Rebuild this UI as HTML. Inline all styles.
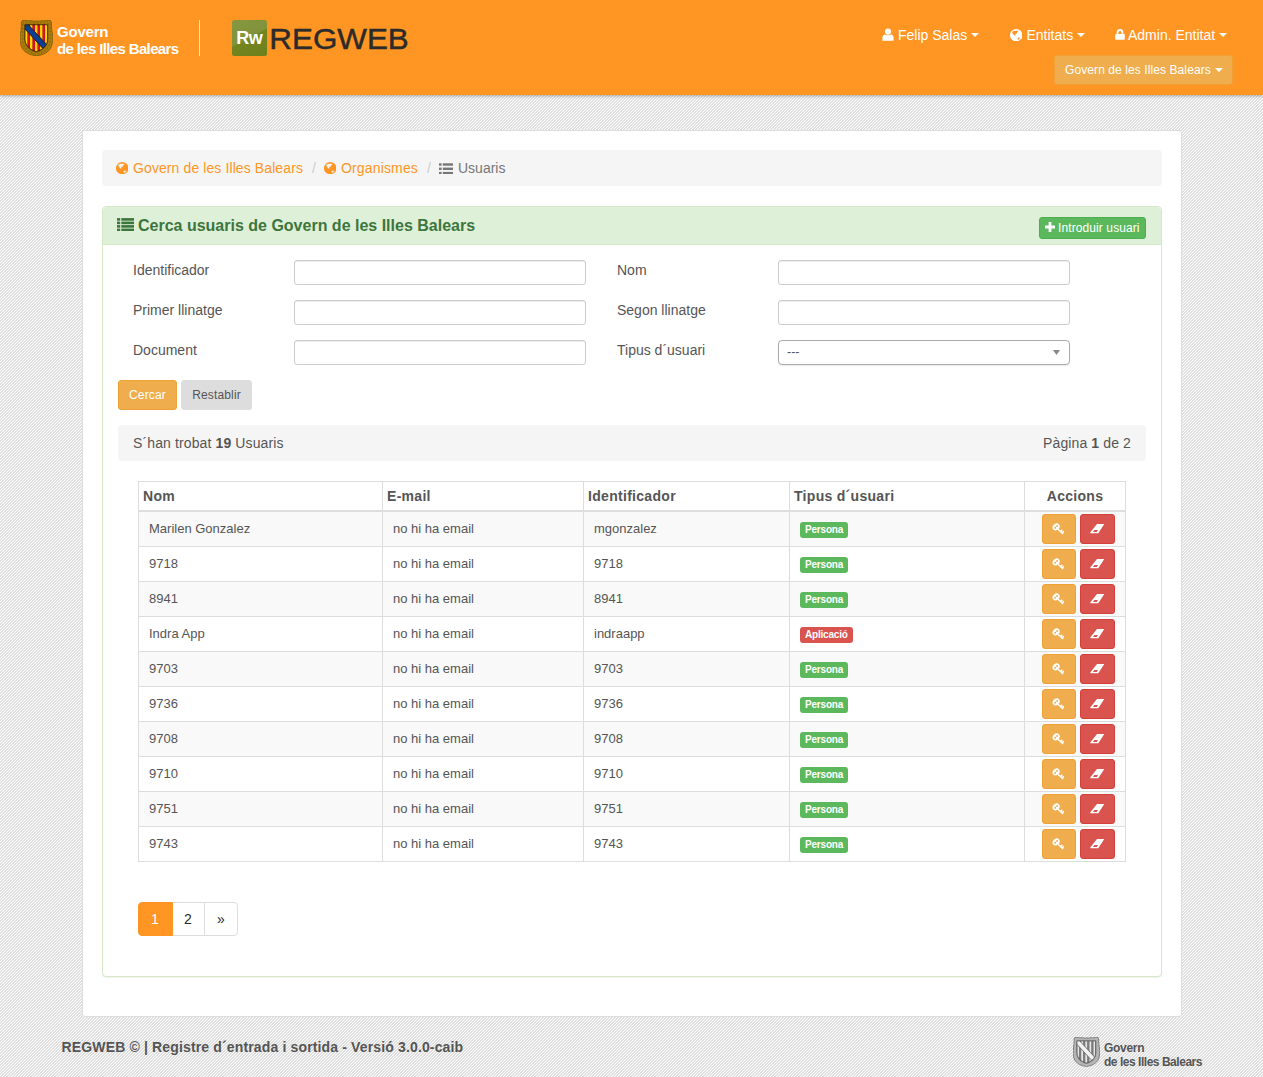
<!DOCTYPE html>
<html lang="ca">
<head>
<meta charset="utf-8">
<title>REGWEB</title>
<style>
*{box-sizing:border-box;}
html,body{margin:0;padding:0;}
body{width:1263px;height:1077px;position:relative;overflow:hidden;font-family:"Liberation Sans",Arial,sans-serif;font-size:14px;line-height:20px;color:#555;background:#e8e8e8;}
#bgpat{position:absolute;left:0;top:0;width:1263px;height:1077px;z-index:0;}
.abs{position:absolute;}
/* header */
#hdr{position:absolute;left:0;top:0;width:1263px;height:95px;background:#ff9523;box-shadow:0 1px 3px rgba(0,0,0,.3);z-index:2;}
#hdr .gv{position:absolute;left:57px;color:#fff;font-weight:bold;font-size:15px;line-height:17px;letter-spacing:-0.35px;white-space:nowrap;}
#hdr .sep{position:absolute;left:199px;top:20px;width:1px;height:36px;background:rgba(255,255,255,.75);}
#rw{position:absolute;left:231.7px;top:20.3px;width:35.2px;height:35.5px;border-radius:2.5px;background:linear-gradient(152deg,#86983f 0%,#80933a 48%,#72851f 51%,#6e801c 100%);color:#fff;font-weight:bold;font-size:18px;line-height:35.5px;text-align:center;letter-spacing:-0.4px;padding-top:1.2px;}
.nav{position:absolute;top:25px;height:20px;color:#fff;font-size:14px;line-height:20px;white-space:nowrap;}
.nav svg{position:absolute;top:4px;}
.caret{display:inline-block;width:0;height:0;border-left:4px solid transparent;border-right:4px solid transparent;border-top:4px solid currentColor;vertical-align:middle;margin-left:4px;position:relative;top:-1px;}
#entbtn{position:absolute;left:1054px;top:55px;width:179px;height:30px;background:#f0ad4e;border:1px solid #eea236;border-radius:3px;color:#fff;font-size:12px;line-height:28px;padding-left:10px;white-space:nowrap;letter-spacing:.09px;}
/* container */
#cont{position:absolute;left:82px;top:130px;width:1100px;height:887px;background:#fff;border:1px solid #dedede;border-radius:3px;z-index:1;}
#bc{position:absolute;left:19px;top:19px;width:1060px;height:36px;background:#f5f5f5;border-radius:4px;font-size:14px;line-height:20px;padding-top:8px;white-space:nowrap;}
#bc span{position:absolute;top:8px;}
#bc .o{color:#ff9523;}
#bc .g{color:#777;}
#bc .s{color:#ccc;}
#bc svg{position:absolute;}
#panel{position:absolute;left:19px;top:75px;width:1060px;height:771px;box-shadow:0 1px 1px rgba(0,0,0,.05);border:1px solid #d6e9c6;border-radius:4px;background:#fff;}
#ph{position:absolute;left:0;top:0;width:1058px;height:38px;background:#dff0d8;border-bottom:1px solid #d6e9c6;border-radius:3px 3px 0 0;}
#ph .t{position:absolute;left:35px;top:10px;font-size:16px;line-height:18px;font-weight:bold;color:#3c763d;white-space:nowrap;}
#ph svg{position:absolute;}
#newbtn{position:absolute;left:936px;top:10px;width:107px;height:22px;background:#5cb85c;border:1px solid #4cae4c;border-radius:3px;color:#fff;font-size:12px;line-height:20px;white-space:nowrap;}
#newbtn span{position:absolute;left:18px;top:0;letter-spacing:.1px;}
.lbl{position:absolute;font-size:14px;line-height:20px;color:#555;white-space:nowrap;}
.inp{position:absolute;width:292px;height:25px;border:1px solid #ccc;border-radius:3px;background:#fff;box-shadow:inset 0 1px 1px rgba(0,0,0,.075);}
.btn{position:absolute;letter-spacing:.15px;height:30px;border-radius:3px;font-size:12px;line-height:28px;text-align:center;border:1px solid transparent;white-space:nowrap;}
#well{position:absolute;left:15px;top:218px;width:1028px;height:36px;background:#f5f5f5;border-radius:4px;font-size:14px;line-height:20px;color:#555;}
#well b{color:#555;}
#well span{letter-spacing:.12px;}
/* table */
#tbl{position:absolute;left:35px;top:274px;width:988px;border-collapse:collapse;table-layout:fixed;font-size:13px;color:#555;}
#tbl th,#tbl td{border:1px solid #ddd;padding:0;white-space:nowrap;overflow:hidden;}
#tbl th{height:29px;font-size:14px;font-weight:bold;text-align:left;padding-left:4px;border-bottom:2px solid #ddd;letter-spacing:.3px;line-height:20px;color:#555;vertical-align:middle;}
#tbl td{height:35px;padding-left:10px;line-height:20px;vertical-align:middle;}
#tbl tr.od td{background:#f9f9f9;}
#tbl tr.r1 td{height:36px;}
#tbl tr.r1 .tag{top:1px;}
.tag{display:inline-block;position:relative;top:0;height:16px;border-radius:3px;color:#fff;font-size:10px;font-weight:bold;line-height:16px;padding:0 5px;vertical-align:middle;letter-spacing:-0.2px;}
.tg{background:#5cb85c;}
.tr{background:#d9534f;}
#tbl td.ac{padding:0;position:relative;}
.ab{position:absolute;top:2px;height:30px;border-radius:3px;border:1px solid;}
.ab svg{position:absolute;}
.ak{left:17px;width:34px;background:#f0ad4e;border-color:#eea236;}
.ae{left:55px;width:35px;background:#d9534f;border-color:#d43f3a;}
/* pagination */
.pg{position:absolute;top:695px;height:34px;border:1px solid #ddd;background:#fff;color:#2a2a2a;font-size:14px;line-height:32px;text-align:center;}
/* footer */
#ft{position:absolute;left:61.6px;top:1037px;font-size:14px;font-weight:bold;color:#555;line-height:20px;white-space:nowrap;z-index:1;letter-spacing:.145px;}
#fl{position:absolute;left:1104px;top:1041px;font-size:12px;font-weight:bold;color:#555;line-height:14px;white-space:nowrap;z-index:1;letter-spacing:-0.3px;}
</style>
</head>
<body>
<svg id="bgpat" width="1263" height="1077" shape-rendering="crispEdges">
<defs><pattern id="dg" width="3" height="3" patternUnits="userSpaceOnUse"><rect width="3" height="3" fill="#dfdfdf"/><rect x="1" y="0" width="1" height="1" fill="#fff"/><rect x="0" y="1" width="1" height="1" fill="#fff"/><rect x="2" y="2" width="1" height="1" fill="#fff"/></pattern></defs>
<rect width="1263" height="1077" fill="url(#dg)"/>
</svg>

<div id="hdr">
<svg class="abs" style="left:20px;top:19.6px;" width="33" height="36.4" viewBox="0 0 33 36.4"><defs><clipPath id="shc"><path d="M5 4.8 H27.6 V19 C27.6 25.5 22.5 30 16.3 31.6 C10.1 30 5 25.5 5 19 Z"/></clipPath></defs><path d="M2.2 0.6 C5 -0.2 7 1.2 9.4 0.8 C11.4 0.2 13 1.6 16.4 1.0 C19.6 1.6 21.4 0.2 23.4 0.8 C25.8 1.2 27.8 -0.2 30.6 0.6 C32 2.4 31.2 5 31.6 8 C31.4 11 32.8 13 32.6 16.4 C33 19.6 32.4 22 32 24.4 C31.4 27.6 29.6 30.4 27 32 C24.6 34 21.6 35 19 35.4 C17.4 36.2 15.4 36.2 13.8 35.4 C11.2 35 8.2 34 5.8 32 C3.2 30.4 1.4 27.6 0.8 24.4 C0.4 22 -0.2 19.6 0.2 16.4 C0 13 1.4 11 1.2 8 C1.6 5 0.8 2.4 2.2 0.6 Z" fill="#ad7c0c" stroke="#80600c" stroke-width="0.9"/><path d="M2.6 3 H30.2 V19.5 C30.2 27.5 24 33 16.4 34.2 C8.8 33 2.6 27.5 2.6 19.5 Z" fill="none" stroke="#7d5a08" stroke-width="1.1" stroke-dasharray="1.6 1.9" opacity=".75"/><path d="M4.2 4 H28.4 V19 C28.4 26 23 30.8 16.3 32.5 C9.6 30.8 4.2 26 4.2 19 Z" fill="#7d5a08"/><g clip-path="url(#shc)"><rect x="5.00" y="4" width="2.56" height="29" fill="#ffd800"/><rect x="7.51" y="4" width="2.56" height="29" fill="#d8102c"/><rect x="10.02" y="4" width="2.56" height="29" fill="#ffd800"/><rect x="12.53" y="4" width="2.56" height="29" fill="#d8102c"/><rect x="15.04" y="4" width="2.56" height="29" fill="#ffd800"/><rect x="17.56" y="4" width="2.56" height="29" fill="#d8102c"/><rect x="20.07" y="4" width="2.56" height="29" fill="#ffd800"/><rect x="22.58" y="4" width="2.56" height="29" fill="#d8102c"/><rect x="25.09" y="4" width="2.56" height="29" fill="#ffd800"/><path d="M5.3 1.4 L29.0 27.2 L25.4 31.2 L1.7 5.4 Z" fill="#0b3f94" stroke="#2a1a08" stroke-width="0.9"/></g><path d="M5 4.8 H27.6 V19 C27.6 25.5 22.5 30 16.3 31.6 C10.1 30 5 25.5 5 19 Z" fill="none" stroke="#2a1a08" stroke-width="0.7"/></svg>
<div class="gv" style="top:23px;letter-spacing:-0.2px;">Govern</div>
<div class="gv" style="top:40px;letter-spacing:-0.64px;">de les Illes Balears</div>
<div class="sep"></div>
<div id="rw">Rw</div>
<svg class="abs" style="left:268px;top:20px;" width="145" height="36"><text x="1.3" y="29.0" font-family="Liberation Sans, Arial, sans-serif" font-size="28.8" fill="#2b2b2b" stroke="#2b2b2b" stroke-width="0.45" textLength="139.5" lengthAdjust="spacingAndGlyphs">REGWEB</text></svg>

<div class="nav" style="left:882px;"><svg width="12" height="13" viewBox="0 0 12 13" style="left:0;top:3px;color:#fff"><circle cx="6" cy="3.6" r="3.1" fill="#fff"/><path d="M0.4 12.7 V9.6 C0.4 7.6 1.6 6.6 3.2 6.4 C4.8 7.6 7.2 7.6 8.8 6.4 C10.4 6.6 11.6 7.6 11.6 9.6 V12.7 Z" fill="#fff"/></svg><span style="margin-left:16px;">Felip Salas</span><i class="caret"></i></div>
<div class="nav" style="left:1009px;"><svg width="12.4" height="12.4" viewBox="0 0 12 12" style="left:0.5px;top:4px;color:#fff"><circle cx="6" cy="6" r="6" fill="currentColor"/><path d="M2.2 2.6 L4.2 1.6 L5.6 2.0 L6.6 1.4 L8.2 1.9 L7.4 3.0 L6.2 4.6 L5.0 5.4 L5.3 6.6 L4.4 6.4 L3.2 5.2 L2.4 4.0 Z M7.4 8.6 L9.0 8.2 L9.8 8.8 L8.6 10.2 L7.6 10.4 Z" fill="#ff9523"/></svg><span style="margin-left:17.5px;">Entitats</span><i class="caret"></i></div>
<div class="nav" style="left:1114px;"><svg width="10" height="11" viewBox="0 0 10 11" style="left:0.5px;top:4.3px;"><path d="M1.7 5.2 V3.5 A3.3 3.4 0 0 1 8.3 3.5 V5.2 H6.6 V3.6 A1.6 1.7 0 0 0 3.4 3.6 V5.2 Z" fill="#fff"/><rect x="0.2" y="4.9" width="9.6" height="5.9" rx="0.7" fill="#fff"/></svg><span style="margin-left:14px;">Admin. Entitat</span><i class="caret"></i></div>
<div id="entbtn">Govern de les Illes Balears<i class="caret" style="margin-left:4px;"></i></div>

</div>

<div id="cont">
<div id="bc"><svg width="12.4" height="12.4" viewBox="0 0 12 12" style="left:14px;top:12px;"><circle cx="6" cy="6" r="6" fill="#ff9523"/><path d="M2.2 2.6 L4.2 1.6 L5.6 2.0 L6.6 1.4 L8.2 1.9 L7.4 3.0 L6.2 4.6 L5.0 5.4 L5.3 6.6 L4.4 6.4 L3.2 5.2 L2.4 4.0 Z M7.4 8.6 L9.0 8.2 L9.8 8.8 L8.6 10.2 L7.6 10.4 Z" fill="#f5f5f5"/></svg><span class="o" style="left:31px;letter-spacing:.1px;">Govern de les Illes Balears</span><span class="s" style="left:210px;">/</span><svg width="12.4" height="12.4" viewBox="0 0 12 12" style="left:222px;top:12px;"><circle cx="6" cy="6" r="6" fill="#ff9523"/><path d="M2.2 2.6 L4.2 1.6 L5.6 2.0 L6.6 1.4 L8.2 1.9 L7.4 3.0 L6.2 4.6 L5.0 5.4 L5.3 6.6 L4.4 6.4 L3.2 5.2 L2.4 4.0 Z M7.4 8.6 L9.0 8.2 L9.8 8.8 L8.6 10.2 L7.6 10.4 Z" fill="#f5f5f5"/></svg><span class="o" style="left:239px;letter-spacing:.15px;">Organismes</span><span class="s" style="left:325px;">/</span><svg width="14.2" height="11.6" viewBox="0 0 14.2 11.6" style="left:337.2px;top:12.6px;"><g fill="#777"><rect x="0" y="0.3" width="2.6" height="2.4"/><rect x="3.8" y="0.3" width="10.4" height="2.4"/><rect x="0" y="4.6" width="2.6" height="2.4"/><rect x="3.8" y="4.6" width="10.4" height="2.4"/><rect x="0" y="8.9" width="2.6" height="2.4"/><rect x="3.8" y="8.9" width="10.4" height="2.4"/></g></svg><span class="g" style="left:356px;">Usuaris</span></div>
<div id="panel">
<div id="ph"><svg width="17.2" height="13.2" viewBox="0 0 17.2 13.2" style="left:13.8px;top:11px;"><g fill="#3c763d"><rect x="0" y="0.1" width="3.2" height="2.6"/><rect x="4.3" y="0.1" width="12.9" height="2.6"/><rect x="0" y="3.6" width="3.2" height="2.6"/><rect x="4.3" y="3.6" width="12.9" height="2.6"/><rect x="0" y="7.1" width="3.2" height="2.6"/><rect x="4.3" y="7.1" width="12.9" height="2.6"/><rect x="0" y="10.6" width="3.2" height="2.6"/><rect x="4.3" y="10.6" width="12.9" height="2.6"/></g></svg><div class="t">Cerca usuaris de Govern de les Illes Balears</div><div id="newbtn"><svg width="10" height="10" viewBox="0 0 10 10" style="left:5px;top:4.2px;"><path d="M3.6 0 H6.4 V3.6 H10 V6.4 H6.4 V10 H3.6 V6.4 H0 V3.6 H3.6 Z" fill="#fff"/></svg><span>Introduir usuari</span></div></div>
<div class="lbl" style="left:30px;top:53px;">Identificador</div>
<div class="lbl" style="left:30px;top:93px;">Primer llinatge</div>
<div class="lbl" style="left:30px;top:133px;">Document</div>
<div class="lbl" style="left:514px;top:53px;">Nom</div>
<div class="lbl" style="left:514px;top:93px;">Segon llinatge</div>
<div class="lbl" style="left:514px;top:133px;">Tipus d´usuari</div>
<div class="inp" style="left:191px;top:53px;"></div>
<div class="inp" style="left:191px;top:93px;"></div>
<div class="inp" style="left:191px;top:133px;"></div>
<div class="inp" style="left:675px;top:53px;"></div>
<div class="inp" style="left:675px;top:93px;"></div>
<div class="inp" style="left:675px;top:133px;font-size:12.5px;line-height:22px;padding-left:8px;color:#555;border-color:#aaa;border-radius:4px;box-shadow:0 1px 1px rgba(0,0,0,.08);">---<svg class="abs" style="right:9.5px;top:9px;" width="7" height="5" viewBox="0 0 7 5"><path d="M0 0 H7 L3.5 5 Z" fill="#888"/></svg></div>
<div class="btn" style="left:15px;top:173px;width:59px;background:#f0ad4e;border-color:#eea236;color:#fff;">Cercar</div>
<div class="btn" style="left:78px;top:173px;width:71px;background:#ddd;border-color:#ddd;color:#555;">Restablir</div>
<div id="well"><span class="abs" style="left:15px;top:8px;white-space:nowrap;">S´han trobat <b>19</b> Usuaris</span><span class="abs" style="right:15px;top:8px;white-space:nowrap;">Pàgina <b>1</b> de 2</span></div>

<table id="tbl"><colgroup><col style="width:244px"><col style="width:201px"><col style="width:206px"><col style="width:235px"><col style="width:101px"></colgroup>
<tr><th>Nom</th><th>E-mail</th><th>Identificador</th><th>Tipus d´usuari</th><th style="text-align:center;padding-left:0;">Accions</th></tr>
<tr class="od r1"><td>Marilen Gonzalez</td><td>no hi ha email</td><td>mgonzalez</td><td><span class="tag tg">Persona</span></td><td class="ac"><div class="ab ak"><svg width="13" height="12" viewBox="0 0 13 12" style="left:9px;top:8px;"><ellipse cx="4.1" cy="3.9" rx="3.8" ry="3.1" transform="rotate(-40 4.1 3.9)" fill="#fff"/><circle cx="5.1" cy="3.05" r="0.95" fill="#f0ad4e"/><circle cx="3.15" cy="4.75" r="0.95" fill="#f0ad4e"/><path d="M6 6.2 L11.2 11 M8.6 8.5 L10.3 6.8 M10.1 9.9 L11.8 8.2" stroke="#fff" stroke-width="1.5" fill="none"/></svg></div><div class="ab ae"><svg width="15" height="10" viewBox="0 0 15 10" style="left:9px;top:9px;"><path d="M7.0 0 H14.3 L8.3 9.2 H0.6 Q-0.1 9.0 0.4 8.3 Z" fill="#fff"/><path d="M4.3 6.0 H8.0 L6.8 8.0 H3.0 Z" fill="#d9534f"/></svg></div></td></tr>
<tr><td>9718</td><td>no hi ha email</td><td>9718</td><td><span class="tag tg">Persona</span></td><td class="ac"><div class="ab ak"><svg width="13" height="12" viewBox="0 0 13 12" style="left:9px;top:8px;"><ellipse cx="4.1" cy="3.9" rx="3.8" ry="3.1" transform="rotate(-40 4.1 3.9)" fill="#fff"/><circle cx="5.1" cy="3.05" r="0.95" fill="#f0ad4e"/><circle cx="3.15" cy="4.75" r="0.95" fill="#f0ad4e"/><path d="M6 6.2 L11.2 11 M8.6 8.5 L10.3 6.8 M10.1 9.9 L11.8 8.2" stroke="#fff" stroke-width="1.5" fill="none"/></svg></div><div class="ab ae"><svg width="15" height="10" viewBox="0 0 15 10" style="left:9px;top:9px;"><path d="M7.0 0 H14.3 L8.3 9.2 H0.6 Q-0.1 9.0 0.4 8.3 Z" fill="#fff"/><path d="M4.3 6.0 H8.0 L6.8 8.0 H3.0 Z" fill="#d9534f"/></svg></div></td></tr>
<tr class="od"><td>8941</td><td>no hi ha email</td><td>8941</td><td><span class="tag tg">Persona</span></td><td class="ac"><div class="ab ak"><svg width="13" height="12" viewBox="0 0 13 12" style="left:9px;top:8px;"><ellipse cx="4.1" cy="3.9" rx="3.8" ry="3.1" transform="rotate(-40 4.1 3.9)" fill="#fff"/><circle cx="5.1" cy="3.05" r="0.95" fill="#f0ad4e"/><circle cx="3.15" cy="4.75" r="0.95" fill="#f0ad4e"/><path d="M6 6.2 L11.2 11 M8.6 8.5 L10.3 6.8 M10.1 9.9 L11.8 8.2" stroke="#fff" stroke-width="1.5" fill="none"/></svg></div><div class="ab ae"><svg width="15" height="10" viewBox="0 0 15 10" style="left:9px;top:9px;"><path d="M7.0 0 H14.3 L8.3 9.2 H0.6 Q-0.1 9.0 0.4 8.3 Z" fill="#fff"/><path d="M4.3 6.0 H8.0 L6.8 8.0 H3.0 Z" fill="#d9534f"/></svg></div></td></tr>
<tr><td>Indra App</td><td>no hi ha email</td><td>indraapp</td><td><span class="tag tr">Aplicació</span></td><td class="ac"><div class="ab ak"><svg width="13" height="12" viewBox="0 0 13 12" style="left:9px;top:8px;"><ellipse cx="4.1" cy="3.9" rx="3.8" ry="3.1" transform="rotate(-40 4.1 3.9)" fill="#fff"/><circle cx="5.1" cy="3.05" r="0.95" fill="#f0ad4e"/><circle cx="3.15" cy="4.75" r="0.95" fill="#f0ad4e"/><path d="M6 6.2 L11.2 11 M8.6 8.5 L10.3 6.8 M10.1 9.9 L11.8 8.2" stroke="#fff" stroke-width="1.5" fill="none"/></svg></div><div class="ab ae"><svg width="15" height="10" viewBox="0 0 15 10" style="left:9px;top:9px;"><path d="M7.0 0 H14.3 L8.3 9.2 H0.6 Q-0.1 9.0 0.4 8.3 Z" fill="#fff"/><path d="M4.3 6.0 H8.0 L6.8 8.0 H3.0 Z" fill="#d9534f"/></svg></div></td></tr>
<tr class="od"><td>9703</td><td>no hi ha email</td><td>9703</td><td><span class="tag tg">Persona</span></td><td class="ac"><div class="ab ak"><svg width="13" height="12" viewBox="0 0 13 12" style="left:9px;top:8px;"><ellipse cx="4.1" cy="3.9" rx="3.8" ry="3.1" transform="rotate(-40 4.1 3.9)" fill="#fff"/><circle cx="5.1" cy="3.05" r="0.95" fill="#f0ad4e"/><circle cx="3.15" cy="4.75" r="0.95" fill="#f0ad4e"/><path d="M6 6.2 L11.2 11 M8.6 8.5 L10.3 6.8 M10.1 9.9 L11.8 8.2" stroke="#fff" stroke-width="1.5" fill="none"/></svg></div><div class="ab ae"><svg width="15" height="10" viewBox="0 0 15 10" style="left:9px;top:9px;"><path d="M7.0 0 H14.3 L8.3 9.2 H0.6 Q-0.1 9.0 0.4 8.3 Z" fill="#fff"/><path d="M4.3 6.0 H8.0 L6.8 8.0 H3.0 Z" fill="#d9534f"/></svg></div></td></tr>
<tr><td>9736</td><td>no hi ha email</td><td>9736</td><td><span class="tag tg">Persona</span></td><td class="ac"><div class="ab ak"><svg width="13" height="12" viewBox="0 0 13 12" style="left:9px;top:8px;"><ellipse cx="4.1" cy="3.9" rx="3.8" ry="3.1" transform="rotate(-40 4.1 3.9)" fill="#fff"/><circle cx="5.1" cy="3.05" r="0.95" fill="#f0ad4e"/><circle cx="3.15" cy="4.75" r="0.95" fill="#f0ad4e"/><path d="M6 6.2 L11.2 11 M8.6 8.5 L10.3 6.8 M10.1 9.9 L11.8 8.2" stroke="#fff" stroke-width="1.5" fill="none"/></svg></div><div class="ab ae"><svg width="15" height="10" viewBox="0 0 15 10" style="left:9px;top:9px;"><path d="M7.0 0 H14.3 L8.3 9.2 H0.6 Q-0.1 9.0 0.4 8.3 Z" fill="#fff"/><path d="M4.3 6.0 H8.0 L6.8 8.0 H3.0 Z" fill="#d9534f"/></svg></div></td></tr>
<tr class="od"><td>9708</td><td>no hi ha email</td><td>9708</td><td><span class="tag tg">Persona</span></td><td class="ac"><div class="ab ak"><svg width="13" height="12" viewBox="0 0 13 12" style="left:9px;top:8px;"><ellipse cx="4.1" cy="3.9" rx="3.8" ry="3.1" transform="rotate(-40 4.1 3.9)" fill="#fff"/><circle cx="5.1" cy="3.05" r="0.95" fill="#f0ad4e"/><circle cx="3.15" cy="4.75" r="0.95" fill="#f0ad4e"/><path d="M6 6.2 L11.2 11 M8.6 8.5 L10.3 6.8 M10.1 9.9 L11.8 8.2" stroke="#fff" stroke-width="1.5" fill="none"/></svg></div><div class="ab ae"><svg width="15" height="10" viewBox="0 0 15 10" style="left:9px;top:9px;"><path d="M7.0 0 H14.3 L8.3 9.2 H0.6 Q-0.1 9.0 0.4 8.3 Z" fill="#fff"/><path d="M4.3 6.0 H8.0 L6.8 8.0 H3.0 Z" fill="#d9534f"/></svg></div></td></tr>
<tr><td>9710</td><td>no hi ha email</td><td>9710</td><td><span class="tag tg">Persona</span></td><td class="ac"><div class="ab ak"><svg width="13" height="12" viewBox="0 0 13 12" style="left:9px;top:8px;"><ellipse cx="4.1" cy="3.9" rx="3.8" ry="3.1" transform="rotate(-40 4.1 3.9)" fill="#fff"/><circle cx="5.1" cy="3.05" r="0.95" fill="#f0ad4e"/><circle cx="3.15" cy="4.75" r="0.95" fill="#f0ad4e"/><path d="M6 6.2 L11.2 11 M8.6 8.5 L10.3 6.8 M10.1 9.9 L11.8 8.2" stroke="#fff" stroke-width="1.5" fill="none"/></svg></div><div class="ab ae"><svg width="15" height="10" viewBox="0 0 15 10" style="left:9px;top:9px;"><path d="M7.0 0 H14.3 L8.3 9.2 H0.6 Q-0.1 9.0 0.4 8.3 Z" fill="#fff"/><path d="M4.3 6.0 H8.0 L6.8 8.0 H3.0 Z" fill="#d9534f"/></svg></div></td></tr>
<tr class="od"><td>9751</td><td>no hi ha email</td><td>9751</td><td><span class="tag tg">Persona</span></td><td class="ac"><div class="ab ak"><svg width="13" height="12" viewBox="0 0 13 12" style="left:9px;top:8px;"><ellipse cx="4.1" cy="3.9" rx="3.8" ry="3.1" transform="rotate(-40 4.1 3.9)" fill="#fff"/><circle cx="5.1" cy="3.05" r="0.95" fill="#f0ad4e"/><circle cx="3.15" cy="4.75" r="0.95" fill="#f0ad4e"/><path d="M6 6.2 L11.2 11 M8.6 8.5 L10.3 6.8 M10.1 9.9 L11.8 8.2" stroke="#fff" stroke-width="1.5" fill="none"/></svg></div><div class="ab ae"><svg width="15" height="10" viewBox="0 0 15 10" style="left:9px;top:9px;"><path d="M7.0 0 H14.3 L8.3 9.2 H0.6 Q-0.1 9.0 0.4 8.3 Z" fill="#fff"/><path d="M4.3 6.0 H8.0 L6.8 8.0 H3.0 Z" fill="#d9534f"/></svg></div></td></tr>
<tr><td>9743</td><td>no hi ha email</td><td>9743</td><td><span class="tag tg">Persona</span></td><td class="ac"><div class="ab ak"><svg width="13" height="12" viewBox="0 0 13 12" style="left:9px;top:8px;"><ellipse cx="4.1" cy="3.9" rx="3.8" ry="3.1" transform="rotate(-40 4.1 3.9)" fill="#fff"/><circle cx="5.1" cy="3.05" r="0.95" fill="#f0ad4e"/><circle cx="3.15" cy="4.75" r="0.95" fill="#f0ad4e"/><path d="M6 6.2 L11.2 11 M8.6 8.5 L10.3 6.8 M10.1 9.9 L11.8 8.2" stroke="#fff" stroke-width="1.5" fill="none"/></svg></div><div class="ab ae"><svg width="15" height="10" viewBox="0 0 15 10" style="left:9px;top:9px;"><path d="M7.0 0 H14.3 L8.3 9.2 H0.6 Q-0.1 9.0 0.4 8.3 Z" fill="#fff"/><path d="M4.3 6.0 H8.0 L6.8 8.0 H3.0 Z" fill="#d9534f"/></svg></div></td></tr>
</table>

<div class="pg" style="left:35px;width:35px;z-index:2;padding-right:1px;background:#ff9523;border-color:#ff9523;color:#fff;border-radius:4px 0 0 4px;">1</div><div class="pg" style="left:68px;width:34px;">2</div><div class="pg" style="left:101px;width:34px;border-radius:0 4px 4px 0;">»</div>

</div>
</div>

<div id="ft">REGWEB © | Registre d´entrada i sortida - Versió 3.0.0-caib</div>
<svg class="abs" style="left:1073px;top:1037px;z-index:1;" width="27" height="30" viewBox="0 0 33 36.4"><defs><clipPath id="shf"><path d="M5 4.8 H27.6 V19 C27.6 25.5 22.5 30 16.3 31.6 C10.1 30 5 25.5 5 19 Z"/></clipPath></defs><path d="M2.2 0.6 C5 -0.2 7 1.2 9.4 0.8 C11.4 0.2 13 1.6 16.4 1.0 C19.6 1.6 21.4 0.2 23.4 0.8 C25.8 1.2 27.8 -0.2 30.6 0.6 C32 2.4 31.2 5 31.6 8 C31.4 11 32.8 13 32.6 16.4 C33 19.6 32.4 22 32 24.4 C31.4 27.6 29.6 30.4 27 32 C24.6 34 21.6 35 19 35.4 C17.4 36.2 15.4 36.2 13.8 35.4 C11.2 35 8.2 34 5.8 32 C3.2 30.4 1.4 27.6 0.8 24.4 C0.4 22 -0.2 19.6 0.2 16.4 C0 13 1.4 11 1.2 8 C1.6 5 0.8 2.4 2.2 0.6 Z" fill="#b4b4b4" stroke="#666" stroke-width="0.9"/><path d="M4.2 4 H28.4 V19 C28.4 26 23 30.8 16.3 32.5 C9.6 30.8 4.2 26 4.2 19 Z" fill="#666"/><g clip-path="url(#shf)"><rect x="5.00" y="4" width="2.56" height="29" fill="#e6e6e6"/><rect x="7.51" y="4" width="2.56" height="29" fill="#7d7d7d"/><rect x="10.02" y="4" width="2.56" height="29" fill="#e6e6e6"/><rect x="12.53" y="4" width="2.56" height="29" fill="#7d7d7d"/><rect x="15.04" y="4" width="2.56" height="29" fill="#e6e6e6"/><rect x="17.56" y="4" width="2.56" height="29" fill="#7d7d7d"/><rect x="20.07" y="4" width="2.56" height="29" fill="#e6e6e6"/><rect x="22.58" y="4" width="2.56" height="29" fill="#7d7d7d"/><rect x="25.09" y="4" width="2.56" height="29" fill="#e6e6e6"/><path d="M5.3 1.4 L29.0 27.2 L25.4 31.2 L1.7 5.4 Z" fill="#f2f2f2" stroke="#555" stroke-width="0.9"/></g><path d="M5 4.8 H27.6 V19 C27.6 25.5 22.5 30 16.3 31.6 C10.1 30 5 25.5 5 19 Z" fill="none" stroke="#555" stroke-width="0.7"/></svg>
<div id="fl">Govern<br><span style="letter-spacing:-0.47px;">de les Illes Balears</span></div>
</body>
</html>
